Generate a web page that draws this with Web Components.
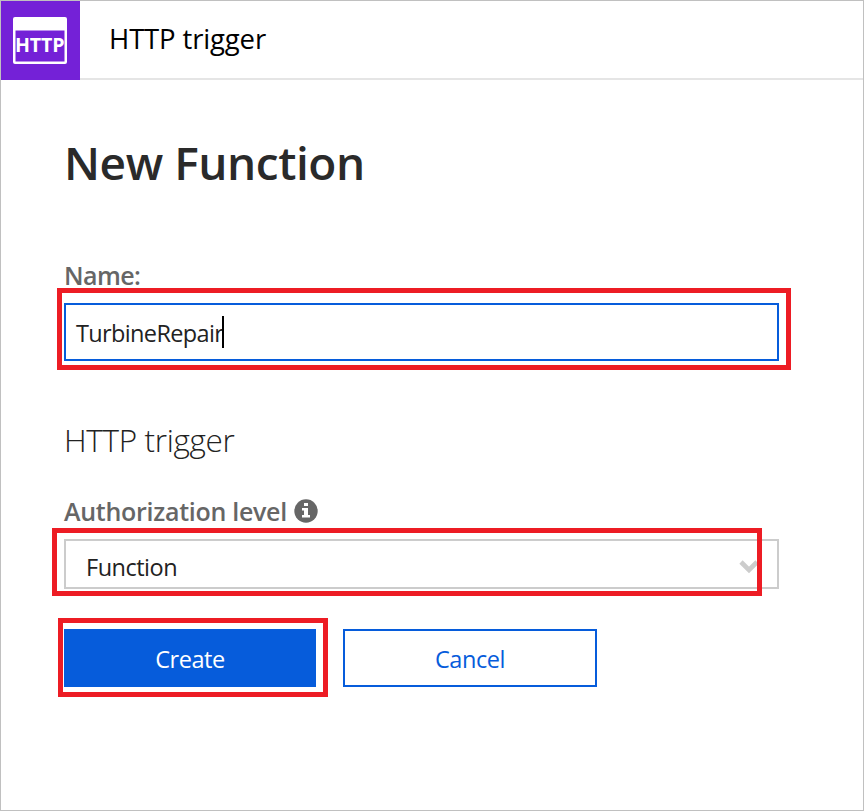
<!DOCTYPE html>
<html lang="en">
<head>
<meta charset="utf-8">
<title>New Function</title>
<style>
body { margin: 0; font-family: "Open Sans", "Noto Sans", sans-serif; color: #000; background: #fff; }
</style>
</head>
<body>
<function-panel></function-panel>
<script>
const define = (name, html) => {
  const template = document.createElement('template');
  template.innerHTML = html;
  customElements.define(name, class extends HTMLElement {
    constructor() {
      super();
      this.attachShadow({ mode: 'open' }).append(template.content.cloneNode(true));
    }
  });
};

define('http-icon', `
  <style>
    :host { display: block; width: 79px; height: 79px; background: #7421d7; }
    svg { display: block; }
    text { font: 700 19.6px "Open Sans", "Noto Sans", sans-serif; fill: #fff; }
  </style>
  <svg width="79" height="79" viewBox="1 1 79 79">
    <path fill="#fff" fill-rule="evenodd" d="M15 17H65Q67 17 67 19V62Q67 64 65 64H15Q13 64 13 62V19Q13 17 15 17ZM15.5 30.5V61.5H64.5V30.5Z"/>
    <text x="15" y="52" textLength="49.5">HTTP</text>
  </svg>`);

define('panel-header', `
  <style>
    :host { display: flex; height: 79px; box-sizing: border-box; }
    .title { flex: 1; box-sizing: border-box; height: 79px; border-bottom: 2px solid #e5e5e5;
      padding: 18px 0 0 29px; font-size: 27.5px; line-height: 40px; letter-spacing: -0.15px; }
  </style>
  <http-icon></http-icon><div class="title"><slot></slot></div>`);

define('field-label', `
  <style>
    :host { display: flex; align-items: center; gap: 7px; height: 30px; color: #666;
      font-size: 25px; font-weight: 600; line-height: 30px; letter-spacing: -0.28px; white-space: nowrap; }
  </style>
  <slot></slot>`);

define('info-icon', `
  <style>:host { display: block; width: 24px; height: 24px; } svg { display: block; }</style>
  <svg width="24" height="24" viewBox="0 0 24 24">
    <circle cx="12" cy="12" r="11.7" fill="#666"/>
    <path fill="#fff" d="M10 4H14V7H10ZM8 9H14V16H16V18.5H8V16H10V11.5H8Z"/>
  </svg>`);

define('mark-box', `
  <style>
    :host { display: block; position: relative; }
    .outline { position: absolute; inset: var(--mark-inset); border: 5px solid #ed1c24; pointer-events: none; }
  </style>
  <slot></slot><div class="outline"></div>`);

define('text-field', `
  <style>
    :host { display: flex; align-items: center; box-sizing: border-box; height: 58px;
      border: 2px solid #065cdb; padding: 2px 0 0 10px; font-size: 23.5px; letter-spacing: -0.64px; color: #222; }
    .caret { width: 2px; height: 32px; margin: 0 0 2px -1px; background: #000; }
  </style>
  <slot></slot><span class="caret"></span>`);

define('select-field', `
  <style>
    :host { display: flex; align-items: center; justify-content: space-between; box-sizing: border-box;
      height: 50px; border: 2px solid #ccc; padding: 0 18px 0 20px; font-size: 23.5px; letter-spacing: -0.5px; color: #222; }
    span { padding-top: 6px; }
    svg { display: block; padding-top: 5px; }
  </style>
  <span><slot></slot></span>
  <svg width="20" height="15" viewBox="0 0 20 15"><path d="M2 3L10 11L18 3" fill="none" stroke="#ccc" stroke-width="4.6"/></svg>`);

define('action-button', `
  <style>
    :host { display: flex; align-items: center; justify-content: center; box-sizing: border-box;
      width: 254px; height: 58px; border: 2px solid #065cdb; padding-top: 2px;
      color: #065cdb; font-size: 23.5px; letter-spacing: -0.45px; }
    :host([primary]) { width: 252px; background: #065cdb; color: #fff; }
  </style>
  <slot></slot>`);

define('function-panel', `
  <style>
    :host { display: block; box-sizing: border-box; width: 864px; height: 811px; border: 1px solid #c0c0c0; }
    main { display: flex; flex-direction: column; width: 715px; padding: 52px 0 0 63px; }
    h1 { margin: 0; font-size: 46px; font-weight: 600; line-height: 60px; letter-spacing: -0.45px; color: #2a2a2a; }
    h2 { margin: 57px 0 34px; font-size: 31.5px; font-weight: 300; line-height: 44px; letter-spacing: -0.35px; color: #222; }
    .name-label { margin-top: 68px; letter-spacing: -0.6px; }
    .name { margin-top: 13px; --mark-inset: -15px -12px -9px -7px; }
    .level { margin-top: 13px; --mark-inset: -11px 17px -7px -12px; }
    .actions { display: flex; gap: 27px; margin-top: 40px; }
    .create { --mark-inset: -11px -12px -10px -6px; }
  </style>
  <panel-header>HTTP trigger</panel-header>
  <main>
    <h1>New Function</h1>
    <field-label class="name-label">Name:</field-label>
    <mark-box class="name"><text-field>TurbineRepair</text-field></mark-box>
    <h2>HTTP trigger</h2>
    <field-label>Authorization level<info-icon></info-icon></field-label>
    <mark-box class="level"><select-field>Function</select-field></mark-box>
    <div class="actions">
      <mark-box class="create"><action-button primary>Create</action-button></mark-box>
      <action-button>Cancel</action-button>
    </div>
  </main>`);
</script>
</body>
</html>
